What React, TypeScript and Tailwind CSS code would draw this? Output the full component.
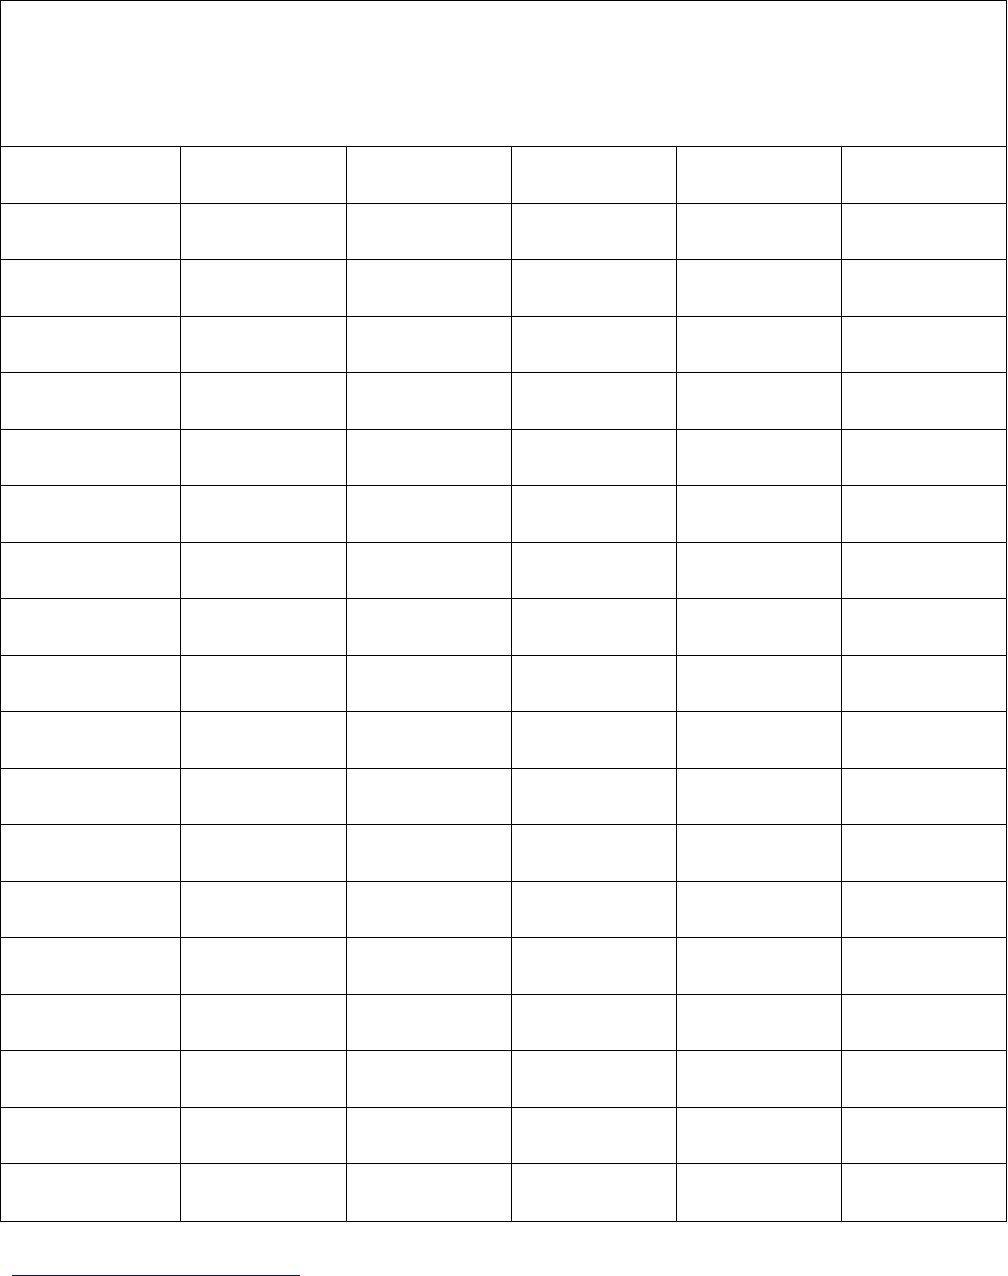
const columns = ['w-[180px]', 'w-[166px]', 'w-[165px]', 'w-[165px]', 'w-[165px]', 'w-[164px]']
const rows = Array.from({ length: 19 }, (_, i) => i)

export default function App() {
  return (
    <div className="min-h-screen bg-white font-['Liberation_Sans',sans-serif]">
      {/* Blank form grid */}
      <div className="w-[1007px] border border-black">
        <div className="h-[146px] border-b border-black" />
        <div className="grid h-[1074px] grid-rows-[repeat(19,1fr)]">
          {rows.map((row) => (
            <div
              key={row}
              className={`flex ${row < rows.length - 1 ? 'border-b border-black' : ''}`}
            >
              {columns.map((width, col) => (
                <div
                  key={col}
                  className={`${width} ${col < columns.length - 1 ? 'border-r border-black' : ''}`}
                />
              ))}
            </div>
          ))}
        </div>
      </div>

      {/* Footnote rule */}
      <div className="ml-[12px] mt-[53px] h-px w-[288px] bg-[#0000cc]" />
    </div>
  )
}
